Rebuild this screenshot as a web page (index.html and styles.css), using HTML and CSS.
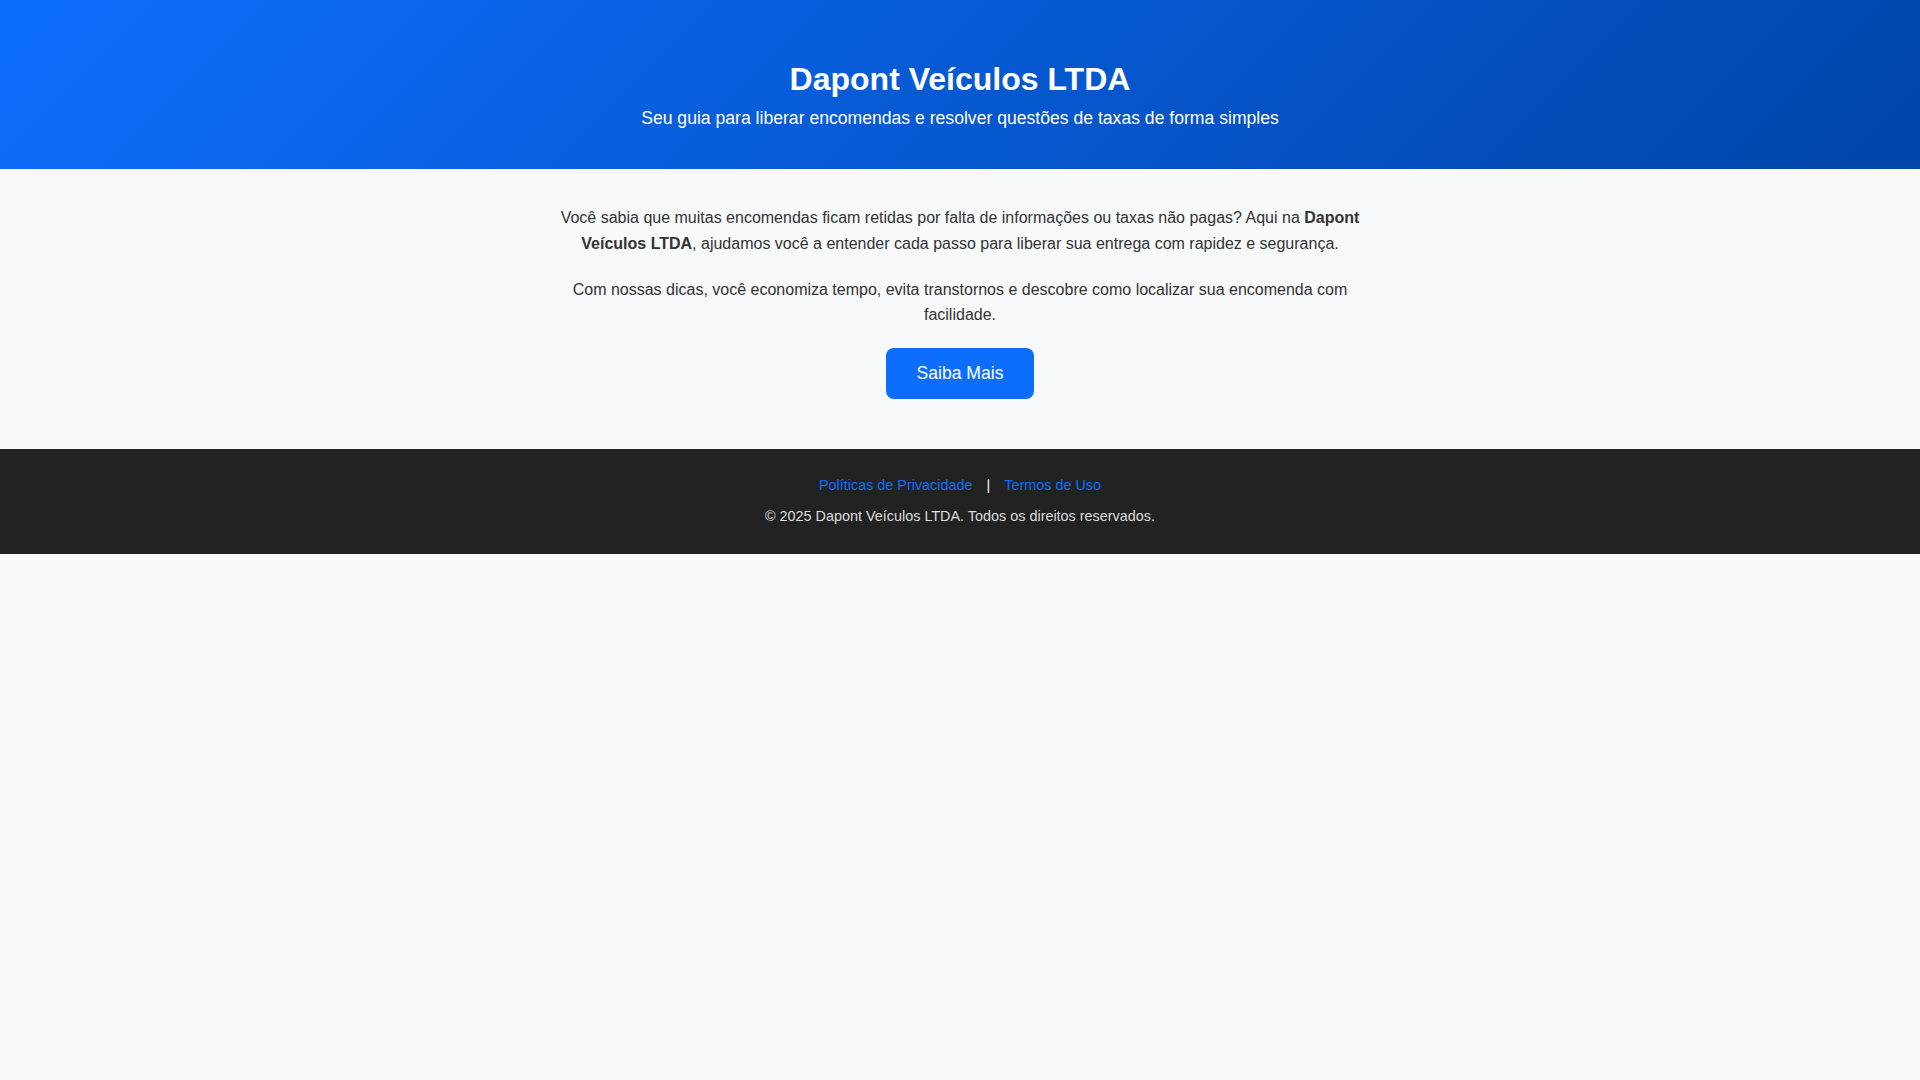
FILE: index.html
```html
<!DOCTYPE html>
<html lang="pt-BR">
<head>
<meta charset="UTF-8">
<title>Dapont Veículos LTDA</title>
<link rel="stylesheet" href="styles.css">
</head>
<body>
<header class="hero">
  <h1 class="hero-title">Dapont Veículos LTDA</h1>
  <p class="hero-sub">Seu guia para liberar encomendas e resolver questões de taxas de forma simples</p>
</header>
<main class="content">
  <p class="text">Você sabia que muitas encomendas ficam retidas por falta de informações ou taxas não pagas? Aqui na <strong>Dapont Veículos LTDA</strong>, ajudamos você a entender cada passo para liberar sua entrega com rapidez e segurança.</p>
  <p class="text">Com nossas dicas, você economiza tempo, evita transtornos e descobre como localizar sua encomenda com facilidade.</p>
  <a class="btn" href="#">Saiba Mais</a>
</main>
<footer class="footer">
  <p class="footer-links"><a href="#">Políticas de Privacidade</a> | <a href="#">Termos de Uso</a></p>
  <p class="footer-copy">© 2025 Dapont Veículos LTDA. Todos os direitos reservados.</p>
</footer>
</body>
</html>
```

FILE: styles.css
```css
html, body {
  margin: 0;
  padding: 0;
}
body {
  background: #f8f9fa;
  color: #333;
  font-family: "Liberation Sans", Arial, sans-serif;
  font-size: 16px;
  line-height: 1.6;
}
.hero {
  background: linear-gradient(135deg, #0d6efd 0%, #0045a8 100%);
  color: #fff;
  text-align: center;
  padding: 61px 20px 40px;
}
.hero-title {
  margin: 0 0 10px;
  font-size: 32px;
  font-weight: bold;
  line-height: normal;
}
.hero-sub {
  margin: 0;
  font-size: 17.6px;
  line-height: normal;
}
.content {
  max-width: 800px;
  margin: 0 auto;
  padding: 36px 20px 49.5px;
  text-align: center;
}
.text {
  margin: 0 0 20.5px;
}
.btn {
  display: inline-block;
  background: #0d6efd;
  color: #fff;
  text-decoration: none;
  font-size: 17.6px;
  line-height: normal;
  padding: 15px 30px;
  border-radius: 8px;
  vertical-align: top;
}
.footer {
  background: #222;
  color: #ddd;
  text-align: center;
  font-size: 14.4px;
  line-height: normal;
  padding: 28px 20px 30px;
}
.footer p {
  margin: 0;
}
.footer-links {
  color: #fff;
  margin-bottom: 15px !important;
}
.footer-links a {
  color: #0d6efd;
  text-decoration: none;
  margin: 0 10px;
}
```
